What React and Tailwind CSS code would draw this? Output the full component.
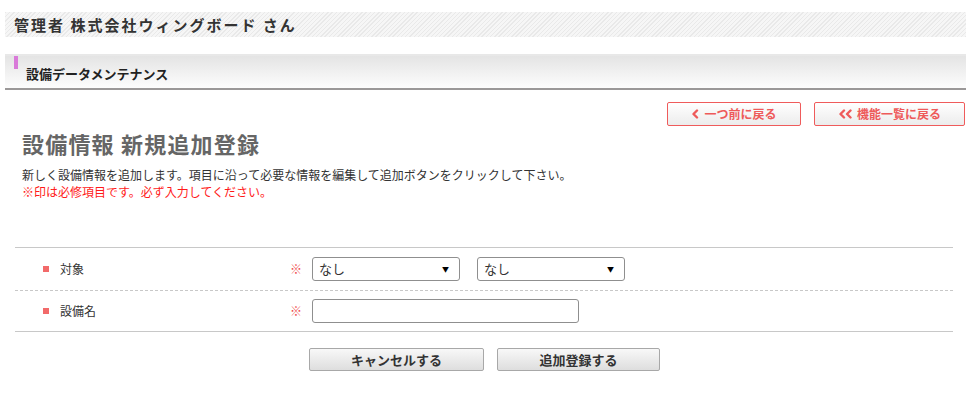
import React from "react";

function Chevron({ double }) {
  return (
    <svg width={double ? 16 : 9} height="10" viewBox={double ? "0 0 16 10" : "0 0 9 10"} className="shrink-0">
      <path d="M6 1.5 L2.5 5 L6 8.5" fill="none" stroke="#ee5a5a" strokeWidth="2.4" strokeLinecap="round" strokeLinejoin="round" />
      {double && (
        <path d="M12.5 1.5 L9 5 L12.5 8.5" fill="none" stroke="#ee5a5a" strokeWidth="2.4" strokeLinecap="round" strokeLinejoin="round" />
      )}
    </svg>
  );
}

function Select() {
  return (
    <div className="w-[148px] h-[24px] border border-[#8f8f8f] rounded-[3px] bg-white flex items-center pl-[6px] pr-[10px] text-[13px] text-[#333]">
      <span className="flex-1">なし</span>
      <span className="text-[7px] text-black">▼</span>
    </div>
  );
}

export default function App() {
  return (
    <div className="w-[971px] h-[405px] bg-white font-['Noto_Sans_CJK_JP','Noto_Sans',sans-serif] text-[#333] pt-[12px]">
      <div className="mx-[5px] h-[25px] flex items-center pl-[9px] bg-[repeating-linear-gradient(-45deg,#e9e9e9_0px,#e9e9e9_1px,#f6f6f6_1px,#f6f6f6_3px)]">
        <span className="text-[15px] font-bold tracking-[2px] text-[#333] leading-none">管理者 株式会社ウィングボード さん</span>
      </div>

      <div className="mx-[5px] mt-[17px] border-t-2 border-[#e8e8e8] border-b-2 border-b-[#9b9898] h-[36px] bg-gradient-to-b from-[#e4e4e4] to-[#fdfdfd] relative flex items-center pl-[21px] pt-[2px]">
        <div className="absolute left-[9px] top-0 w-[4px] h-[13px] bg-[#d97ad9]" />
        <span className="text-[13px] font-bold text-[#222] mt-[2px]">設備データメンテナンス</span>
      </div>

      <div className="mx-[5px] mt-[12px] flex justify-end gap-[13px] pr-[1px]">
        <button className="w-[134px] h-[24px] border border-[#ef5b5b] rounded-[2px] bg-gradient-to-b from-white to-[#ececec] flex items-center justify-center gap-[4px] text-[12px] font-bold text-[#ee5a5a]">
          <Chevron />
          <span>一つ前に戻る</span>
        </button>
        <button className="w-[151px] h-[24px] border border-[#ef5b5b] rounded-[2px] bg-gradient-to-b from-white to-[#ececec] flex items-center justify-center gap-[3px] text-[12px] font-bold text-[#ee5a5a]">
          <Chevron double />
          <span>機能一覧に戻る</span>
        </button>
      </div>

      <div className="pl-[22px] mt-[2px]">
        <h1 className="text-[22px] font-bold text-[#666] tracking-[1.2px] leading-[30px]">設備情報 新規追加登録</h1>
        <p className="mt-[8px] text-[12px] leading-[17px] text-[#333]">新しく設備情報を追加します。項目に沿って必要な情報を編集して追加ボタンをクリックして下さい。</p>
        <p className="text-[12px] leading-[17px] text-[#ff1a1a]">※印は必修項目です。必ず入力してください。</p>
      </div>

      <div className="ml-[15px] w-[938px] mt-[47px] border-t border-[#c8c8c8]">
        <div className="h-[43px] flex items-center border-b border-dashed border-[#c8c8c8]">
          <div className="w-[275px] flex items-center pl-[28px] gap-[11px] text-[12px]">
            <span className="w-[6px] h-[6px] bg-[#f26a6a]" />
            <span>対象</span>
          </div>
          <span className="text-[12px] text-[#f05050] w-[22px]">※</span>
          <div className="flex gap-[17px]">
            <Select />
            <Select />
          </div>
        </div>
        <div className="h-[41px] flex items-center border-b border-[#c8c8c8]">
          <div className="w-[275px] flex items-center pl-[28px] gap-[11px] text-[12px]">
            <span className="w-[6px] h-[6px] bg-[#f26a6a]" />
            <span>設備名</span>
          </div>
          <span className="text-[12px] text-[#f05050] w-[22px]">※</span>
          <div className="w-[267px] h-[24px] border border-[#8f8f8f] rounded-[3px] bg-white" />
        </div>
      </div>

      <div className="mt-[16px] flex gap-[13px] pl-[309px]">
        <button className="w-[175px] h-[23px] border border-[#a8a8a8] rounded-[2px] bg-gradient-to-b from-[#f8f8f8] to-[#dedede] text-[13px] font-bold text-[#333]">キャンセルする</button>
        <button className="w-[163px] h-[23px] border border-[#a8a8a8] rounded-[2px] bg-gradient-to-b from-[#f8f8f8] to-[#dedede] text-[13px] font-bold text-[#333]">追加登録する</button>
      </div>
    </div>
  );
}
